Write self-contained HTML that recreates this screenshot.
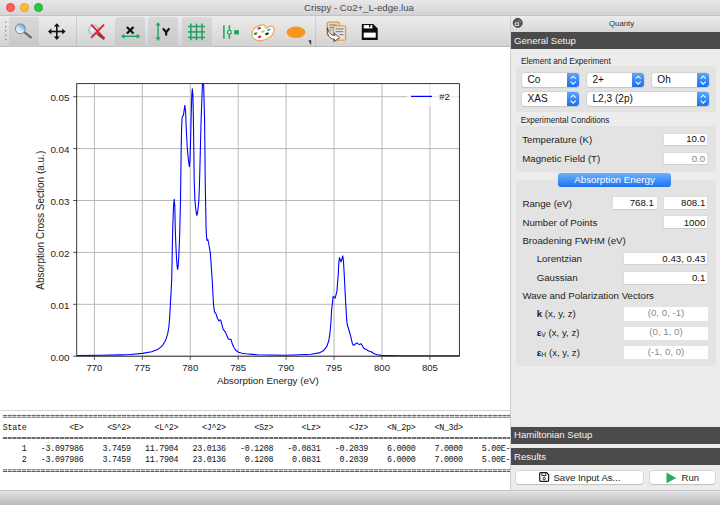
<!DOCTYPE html>
<html><head><meta charset="utf-8">
<style>
*{margin:0;padding:0;box-sizing:border-box}
html,body{width:720px;height:505px;overflow:hidden;background:#fff;font-family:"Liberation Sans",sans-serif;color:#222}
.a{position:absolute}
.t{position:absolute;white-space:nowrap;line-height:1}
#titlebar{left:0;top:0;width:720px;height:16px;background:linear-gradient(#e9e7e9,#d5d3d5);border-bottom:1px solid #c4c2c4}
.light{position:absolute;top:3.15px;width:9px;height:9px;border-radius:50%}
#toolbar{left:0;top:16px;width:511px;height:31px;background:linear-gradient(#ececec,#d3d3d3);border-bottom:1px solid #bdbdbd}
.chk{position:absolute;top:1px;height:30px;border-radius:3px 3px 0 0;background:linear-gradient(#d9d9d9,#c8c8c8)}
#dock{left:510px;top:16px;width:210px;height:474px;background:#ececec}
#docktitle{left:0;top:0;width:210px;height:16px;background:linear-gradient(#ececec,#d7d7d7)}
.hdr{position:absolute;left:1px;width:209px;background:#4b4b4b;color:#f4f4f4;font-size:9.6px}
.hdr span{position:absolute;left:3px}
.grp{position:absolute;background:#e3e3e3;border-radius:4px}
.lbl{position:absolute;white-space:nowrap;font-size:9.7px;line-height:1;color:#222}
.fld{position:absolute;background:#fff;border:0.5px solid #dddddd;border-bottom-color:#cfcfcf;font-size:9.4px;line-height:1;text-align:right;color:#111}
.fld span{position:absolute;right:3px}
.combo{position:absolute;background:#fff;border-radius:3px;box-shadow:0 0 0 0.5px #c8c8c8,0 0.5px 1px rgba(0,0,0,.15);font-size:9.9px;color:#111}
.combo .st{position:absolute;right:0;top:0;bottom:0;width:12px;border-radius:0 3px 3px 0;background:linear-gradient(#5aa5fb,#1b70ef)}

.combo span{position:absolute;left:5.7px}
#out{left:0;top:411px;width:510px;height:79px;overflow:hidden;background:#fff;font-family:"Liberation Mono",monospace;font-size:7.9px;color:#111}
#status{left:0;top:490px;width:720px;height:15px;background:linear-gradient(#e3e3e3,#b9b9b9);border-top:1px solid #c4c4c4}
.btn{position:absolute;background:#fff;border-radius:3px;box-shadow:0 0 0 0.5px #c6c6c6,0 0.5px 1px rgba(0,0,0,.2);font-size:9.6px}
</style></head><body>

<div id="titlebar" class="a">
 <div class="light" style="left:5.57px;background:#fe5f57;border:0.5px solid #e8493f"></div>
 <div class="light" style="left:19.9px;background:#febc2e;border:0.5px solid #e3a322"></div>
 <div class="light" style="left:34.25px;background:#2ac840;border:0.5px solid #1fac30"></div>
 <div class="t" style="left:304px;top:3.3px;font-size:9.65px;color:#4a4a4a">Crispy - Co2+_L-edge.lua</div>
</div>

<div id="toolbar" class="a">
 <!-- handle dots -->
 <svg class="a" style="left:0;top:0" width="511" height="31">
  <g fill="#858585"><rect x="5" y="5.6" width="1.3" height="1.3"/><rect x="5" y="9.9" width="1.3" height="1.3"/><rect x="5" y="14.2" width="1.3" height="1.3"/><rect x="5" y="18.6" width="1.3" height="1.3"/><rect x="5" y="22.8" width="1.3" height="1.3"/></g>
  <line x1="76.5" y1="1" x2="76.5" y2="30" stroke="#9a9a9a" stroke-width="0.8" stroke-dasharray="1,1.5"/>
  <line x1="315.6" y1="1" x2="315.6" y2="30" stroke="#9a9a9a" stroke-width="0.8" stroke-dasharray="1,1.5"/>
 </svg>
 <div class="chk" style="left:9px;width:29.5px"></div>
 <div class="chk" style="left:115.3px;width:29.7px"></div>
 <div class="chk" style="left:148.2px;width:30px"></div>
 <div class="chk" style="left:181.7px;width:30px"></div>
 <svg class="a" style="left:0;top:0" width="511" height="31">
  <!-- zoom magnifier -->
  <defs><radialGradient id="lens2" cx="0.4" cy="0.4" r="0.7"><stop offset="0" stop-color="#f4fbff"/><stop offset="1" stop-color="#9fd3ef"/></radialGradient><linearGradient id="lens" x1="0.8" y1="0.1" x2="0.2" y2="0.9"><stop offset="0" stop-color="#44ace4"/><stop offset="0.5" stop-color="#bfe2f4"/><stop offset="1" stop-color="#f4f9fb"/></linearGradient></defs>
  <line x1="24.6" y1="16.4" x2="30.8" y2="21.4" stroke="#6e5664" stroke-width="2.3" stroke-linecap="round"/>
  <line x1="24.6" y1="16.4" x2="30.8" y2="21.4" stroke="#a48a98" stroke-width="0.7" stroke-linecap="round"/>
  <circle cx="20.35" cy="12.8" r="4.9" fill="url(#lens)" stroke="#8e7e86" stroke-width="1"/>
  <!-- move -->
  <g stroke="#111" stroke-width="1.6" fill="#111">
   <line x1="56.8" y1="9" x2="56.8" y2="22"/><line x1="50" y1="15.5" x2="63.6" y2="15.5"/>
  </g>
  <g fill="#111">
   <path d="M56.8,7.2 L53.8,10.6 L59.8,10.6Z"/><path d="M56.8,23.9 L53.8,20.5 L59.8,20.5Z"/>
   <path d="M48,15.5 L51.4,12.5 L51.4,18.5Z"/><path d="M65.6,15.5 L62.2,12.5 L62.2,18.5Z"/>
  </g>
  <!-- reset zoom: magnifier with red x -->
  <line x1="97" y1="17.5" x2="103.6" y2="22.6" stroke="#4a4048" stroke-width="2" stroke-linecap="round"/>
  <circle cx="93.7" cy="13.9" r="4.9" fill="url(#lens2)" stroke="#a8a8ac" stroke-width="0.9"/>
  <g stroke="#ec1c2a" stroke-width="1.9" stroke-linecap="butt"><line x1="91.1" y1="8.7" x2="104.5" y2="22.4"/><line x1="104" y1="8.7" x2="91.1" y2="21.8"/></g>
  <!-- X axis -->
  <g stroke="#111" stroke-width="2.2" stroke-linecap="butt"><line x1="126.9" y1="10.9" x2="133.5" y2="17.6"/><line x1="133.5" y1="10.9" x2="126.9" y2="17.6"/></g>
  <g stroke="#1fa35a" stroke-width="1.4"><line x1="123" y1="20.3" x2="138.3" y2="20.3"/></g>
  <g fill="#1fa35a"><path d="M120.9,20.3 L124.6,17.9 L124.6,22.7Z"/><path d="M140.4,20.3 L136.7,17.9 L136.7,22.7Z"/></g>
  <!-- Y axis -->
  <g stroke="#1fa35a" stroke-width="1.4"><line x1="158.1" y1="8" x2="158.1" y2="23"/></g>
  <g fill="#1fa35a"><path d="M158.1,5.9 L155.7,9.6 L160.5,9.6Z"/><path d="M158.1,25 L155.7,21.3 L160.5,21.3Z"/></g>
  <g stroke="#111" stroke-width="2.2" stroke-linecap="butt" fill="none"><path d="M162.9,12.4 L166.15,16.2 L169.4,12.4 M166.15,16.2 L166.15,19.6"/></g>
  <!-- grid -->
  <g stroke="#1ca35c" stroke-width="1.5">
   <line x1="190.9" y1="7.6" x2="190.9" y2="24.2"/><line x1="196.5" y1="7.6" x2="196.5" y2="24.2"/><line x1="202" y1="7.6" x2="202" y2="24.2"/>
   <line x1="188" y1="10.5" x2="205" y2="10.5"/><line x1="188" y1="15.9" x2="205" y2="15.9"/><line x1="188" y1="21.5" x2="205" y2="21.5"/>
  </g>
  <!-- subplots -->
  <g stroke="#1ca35c" stroke-width="1.5"><line x1="223.9" y1="9.3" x2="223.9" y2="22.8"/><line x1="229.4" y1="9.3" x2="229.4" y2="13.8"/><line x1="229.4" y1="18.6" x2="229.4" y2="22.8"/></g>
  <circle cx="229.4" cy="16.2" r="1.9" fill="#fff" stroke="#1ca35c" stroke-width="1.2"/>
  <rect x="234.2" y="14.2" width="4.7" height="4.2" fill="#1ca35c"/>
  <!-- palette -->
  <path d="M264.5,9.0 C258,8.4 252.2,12.5 251.9,18 C251.6,22.5 256,25 261,24.6 C267.5,24 273.8,19.5 274,14 C274.2,10.6 271.5,9.4 268.8,10.6 C267.2,11.3 266.2,12.4 265.4,12.0 C264.6,11.6 265.8,9.3 264.5,9.0Z" fill="#fff" stroke="#f0a454" stroke-width="1.2"/>
  <g transform="rotate(-20 263 16)">
  </g>
  <ellipse cx="259.2" cy="12.3" rx="1.9" ry="1.1" fill="#6a3b9c" transform="rotate(-20 259.2 12.3)"/>
  <ellipse cx="268.75" cy="13.7" rx="1.9" ry="1.1" fill="#1fb0ee" transform="rotate(-20 268.75 13.7)"/>
  <ellipse cx="262.9" cy="15.5" rx="1.9" ry="1.1" fill="#c5d619" transform="rotate(-20 262.9 15.5)"/>
  <ellipse cx="255.6" cy="17.6" rx="1.9" ry="1.1" fill="#17a34e" transform="rotate(-20 255.6 17.6)"/>
  <ellipse cx="267" cy="17.8" rx="1.9" ry="1.1" fill="#1e1e1e" transform="rotate(-20 267 17.8)"/>
  <ellipse cx="259.6" cy="20.9" rx="1.9" ry="1.1" fill="#e6197a" transform="rotate(-20 259.6 20.9)"/>
  <!-- orange ellipse -->
  <ellipse cx="296" cy="16.3" rx="9.4" ry="5.8" fill="#f7941d"/>
  <path d="M308.3,24.2 L311.2,24.2 L311.2,29.2Z" fill="#333"/>
  <!-- copy docs -->
  <rect x="327.2" y="6.1" width="12.1" height="13.4" rx="1.3" fill="#d9d9db" stroke="#f39c2e" stroke-width="1.3"/>
  <g stroke="#6a6a6a" stroke-width="0.9"><line x1="329.4" y1="9.0" x2="336.6" y2="9.0"/><line x1="329.4" y1="11.6" x2="334.8" y2="11.6"/><line x1="329.4" y1="14.2" x2="331.2" y2="14.2"/></g>
  <rect x="333.4" y="9.9" width="12.2" height="14.2" rx="1.3" fill="#e2e2e4" stroke="#f39c2e" stroke-width="1.3"/>
  <g stroke="#6a6a6a" stroke-width="0.9"><line x1="335.6" y1="12.9" x2="343.6" y2="12.9"/><line x1="335.6" y1="15.7" x2="343.2" y2="15.7"/><line x1="339.2" y1="18.7" x2="343.6" y2="18.7"/></g>
  <path d="M327.4,11.8 C328.6,16.8 331.0,19.4 335.0,19.6 L334.2,17.0 L339.6,21.8 L333.8,25.6 L334.6,23.2 C329.6,23.2 326.6,18.6 327.4,11.8 Z" fill="#fff" stroke="#222" stroke-width="0.75" stroke-linejoin="round"/>
  <!-- floppy -->
  <path d="M361.8,8.0 L373.2,8.0 L377.7,12.4 L377.7,24.1 L361.8,24.1Z" fill="#0a0a0a"/>
  <rect x="363.7" y="16.6" width="12.05" height="5.0" fill="#fff"/>
  <rect x="363.7" y="9.1" width="8.7" height="3.3" fill="#fff"/>
  <rect x="369.0" y="9.1" width="1.4" height="2.2" fill="#0a0a0a"/>
 </svg>
</div>

<div id="dock" class="a">
 <div class="a" style="left:0;top:0;width:1px;height:474px;background:#cfcfcf;z-index:3"></div>
 <div id="docktitle" class="a">
  <svg class="a" style="left:0;top:0" width="20" height="16">
   <circle cx="7.7" cy="6.9" r="4.45" fill="#5c5c5c" stroke="#383838" stroke-width="1"/>
   <rect x="4.9" y="6.5" width="4" height="3.4" fill="#e6e6e6"/><rect x="5.9" y="7.3" width="1.9" height="1.7" fill="#444"/>
   <path d="M9.3,5.0 L10.3,5.0 L10.3,6.2" stroke="#cfcfcf" stroke-width="0.6" fill="none"/>
  </svg>
  <div class="t" style="left:99px;top:4.1px;font-size:7.8px;color:#333">Quanty</div>
 </div>
 <div class="hdr" style="top:16px;height:16.7px"><span style="top:2.8px">General Setup</span></div>
 <!-- content will be added -->
 <div class="lbl" style="left:11.00px;top:41.71px;font-size:8.2px;">Element and Experiment</div>
<div class="grp" style="left:5.80px;top:50.10px;width:200.30px;height:45.50px"></div>
<div class="combo" style="left:11.90px;top:56.70px;width:57.00px;height:14.10px;font-size:10.1px"><span style="top:1.55px">Co</span><div class="st"><svg style="position:absolute;left:0;top:0" width="12" height="14"><path d="M3.7,5.7 L6.2,3.2 L8.7,5.7 M3.7,8.7 L6.2,11.2 L8.7,8.7" stroke="#fff" stroke-width="1.05" fill="none"/></svg></div></div>
<div class="combo" style="left:76.80px;top:56.70px;width:57.00px;height:14.10px;font-size:10.1px"><span style="top:1.55px">2+</span><div class="st"><svg style="position:absolute;left:0;top:0" width="12" height="14"><path d="M3.7,5.7 L6.2,3.2 L8.7,5.7 M3.7,8.7 L6.2,11.2 L8.7,8.7" stroke="#fff" stroke-width="1.05" fill="none"/></svg></div></div>
<div class="combo" style="left:141.60px;top:56.70px;width:57.10px;height:14.10px;font-size:10.1px"><span style="top:1.55px">Oh</span><div class="st"><svg style="position:absolute;left:0;top:0" width="12" height="14"><path d="M3.7,5.7 L6.2,3.2 L8.7,5.7 M3.7,8.7 L6.2,11.2 L8.7,8.7" stroke="#fff" stroke-width="1.05" fill="none"/></svg></div></div>
<div class="combo" style="left:11.90px;top:75.60px;width:57.00px;height:14.00px;font-size:10.1px"><span style="top:1.65px">XAS</span><div class="st"><svg style="position:absolute;left:0;top:0" width="12" height="14"><path d="M3.7,5.7 L6.2,3.2 L8.7,5.7 M3.7,8.7 L6.2,11.2 L8.7,8.7" stroke="#fff" stroke-width="1.05" fill="none"/></svg></div></div>
<div class="combo" style="left:76.80px;top:75.60px;width:121.90px;height:14.00px;font-size:10.1px"><span style="top:1.65px">L2,3 (2p)</span><div class="st"><svg style="position:absolute;left:0;top:0" width="12" height="14"><path d="M3.7,5.7 L6.2,3.2 L8.7,5.7 M3.7,8.7 L6.2,11.2 L8.7,8.7" stroke="#fff" stroke-width="1.05" fill="none"/></svg></div></div>
<div class="lbl" style="left:10.70px;top:100.76px;font-size:8.2px;">Experimental Conditions</div>
<div class="grp" style="left:5.50px;top:109.60px;width:200.30px;height:46.40px"></div>
<div class="lbl" style="left:12.20px;top:118.69px;font-size:9.7px;">Temperature (K)</div>
<div class="fld" style="left:152.80px;top:116.60px;width:45.70px;height:13.80px;font-size:9.7px;color:#111;"><span style="right:2.4px;top:0.79px">10.0</span></div>
<div class="lbl" style="left:12.20px;top:137.99px;font-size:9.7px;">Magnetic Field (T)</div>
<div class="fld" style="left:152.80px;top:136.00px;width:45.70px;height:13.20px;font-size:9.7px;color:#888;"><span style="right:2.4px;top:0.59px">0.0</span></div>
<div class="grp" style="left:5.50px;top:164.00px;width:200.10px;height:186.20px"></div>
<div class="a" style="left:48.299999999999955px;top:156.5px;width:112.5px;height:14.2px;border-radius:3px;background:linear-gradient(#6cb2fc,#1c72f0);color:#fff;font-size:9.8px"><span class="t" style="left:15.9px;top:2.50px">Absorption Energy</span></div>
<div class="lbl" style="left:12.40px;top:182.59px;font-size:9.7px;">Range (eV)</div>
<div class="fld" style="left:101.50px;top:180.30px;width:46.10px;height:14.10px;font-size:9.7px;color:#111;"><span style="right:2.7px;top:1.19px">768.1</span></div>
<div class="fld" style="left:152.70px;top:180.30px;width:45.70px;height:14.10px;font-size:9.7px;color:#111;"><span style="right:2.1px;top:1.19px">808.1</span></div>
<div class="lbl" style="left:12.40px;top:201.69px;font-size:9.7px;">Number of Points</div>
<div class="fld" style="left:152.70px;top:199.30px;width:45.70px;height:14.00px;font-size:9.7px;color:#111;"><span style="right:2.1px;top:1.29px">1000</span></div>
<div class="lbl" style="left:12.40px;top:219.79px;font-size:9.7px;">Broadening FWHM (eV)</div>
<div class="lbl" style="left:26.70px;top:237.89px;font-size:9.7px;">Lorentzian</div>
<div class="fld" style="left:113.30px;top:235.50px;width:85.20px;height:13.75px;font-size:9.7px;color:#111;"><span style="right:2.1px;top:1.19px">0.43, 0.43</span></div>
<div class="lbl" style="left:26.70px;top:257.29px;font-size:9.7px;">Gaussian</div>
<div class="fld" style="left:113.30px;top:254.70px;width:85.20px;height:14.10px;font-size:9.7px;color:#111;"><span style="right:2.1px;top:1.39px">0.1</span></div>
<div class="lbl" style="left:12.40px;top:275.39px;font-size:9.7px;">Wave and Polarization Vectors</div>
<div class="lbl" style="left:26.70px;top:292.89px;font-size:9.7px;"><b>k</b> (x, y, z)</div>
<div class="fld" style="left:114.00px;top:291.40px;width:84.00px;height:13.30px;font-size:9.7px;color:#8a8a8a;border:0;"><span style="left:0;right:0;top:0.49px;text-align:center">(0, 0, -1)</span></div>
<div class="lbl" style="left:26.70px;top:312.49px;font-size:9.7px;"><b>&#949;</b><span style="font-size:6.8px;position:relative;top:1px">V</span> (x, y, z)</div>
<div class="fld" style="left:114.00px;top:311.00px;width:84.00px;height:12.80px;font-size:9.7px;color:#8a8a8a;border:0;"><span style="left:0;right:0;top:0.39px;text-align:center">(0, 1, 0)</span></div>
<div class="lbl" style="left:26.70px;top:331.79px;font-size:9.7px;"><b>&#949;</b><span style="font-size:6.8px;position:relative;top:1px">H</span> (x, y, z)</div>
<div class="fld" style="left:114.00px;top:330.00px;width:84.00px;height:13.20px;font-size:9.7px;color:#8a8a8a;border:0;"><span style="left:0;right:0;top:0.59px;text-align:center">(-1, 0, 0)</span></div>

 <div class="hdr" style="top:411.0px;height:17.4px"><span style="top:2.3px">Hamiltonian Setup</span></div>
 <div class="hdr" style="top:432.1px;height:16.6px"><span style="top:2.6px">Results</span></div>
 <div class="btn" style="left:6.4px;top:454.5px;width:127px;height:13.7px">
   <svg class="a" style="left:22.6px;top:1.6px" width="11" height="11"><path d="M1.5,0.7 L7.6,0.7 L9.6,2.7 L9.6,8.6 Q9.6,9.4 8.8,9.4 L1.5,9.4 Q0.7,9.4 0.7,8.6 L0.7,1.5 Q0.7,0.7 1.5,0.7Z" fill="none" stroke="#1a1a1a" stroke-width="1.2"/><path d="M2.9,0.7 L2.9,3.5 L6.9,3.5 L6.9,0.7" fill="none" stroke="#1a1a1a" stroke-width="0.9"/><circle cx="5.1" cy="6.5" r="1.25" fill="none" stroke="#1a1a1a" stroke-width="0.9"/></svg>
   <span class="t" style="left:37px;top:2.3px">Save Input As...</span></div>
 <div class="btn" style="left:139.6px;top:454.6px;width:65.6px;height:13.6px">
   <svg class="a" style="left:16px;top:1px" width="12" height="12"><path d="M0.5,0.6 L10.2,5.9 L0.5,11.3Z" fill="#27ae5a"/></svg>
   <span class="t" style="left:32px;top:2.3px">Run</span></div>

</div>

<!-- plot -->
<svg class="a" style="left:0;top:47px" width="510" height="363" viewBox="0 47 510 363">
 <defs><clipPath id="ax"><rect x="76.7" y="83.6" width="382.7" height="272.6"/></clipPath></defs>
 <line x1="94.40" y1="83.6" x2="94.40" y2="356.2" stroke="#b8b8b8" stroke-width="1"/>
 <line x1="94.40" y1="356.2" x2="94.40" y2="359.7" stroke="#222" stroke-width="0.8"/>
 <text x="94.40" y="370.6" font-size="9.6" text-anchor="middle" fill="#222">770</text>
 <line x1="142.33" y1="83.6" x2="142.33" y2="356.2" stroke="#b8b8b8" stroke-width="1"/>
 <line x1="142.33" y1="356.2" x2="142.33" y2="359.7" stroke="#222" stroke-width="0.8"/>
 <text x="142.33" y="370.6" font-size="9.6" text-anchor="middle" fill="#222">775</text>
 <line x1="190.26" y1="83.6" x2="190.26" y2="356.2" stroke="#b8b8b8" stroke-width="1"/>
 <line x1="190.26" y1="356.2" x2="190.26" y2="359.7" stroke="#222" stroke-width="0.8"/>
 <text x="190.26" y="370.6" font-size="9.6" text-anchor="middle" fill="#222">780</text>
 <line x1="238.19" y1="83.6" x2="238.19" y2="356.2" stroke="#b8b8b8" stroke-width="1"/>
 <line x1="238.19" y1="356.2" x2="238.19" y2="359.7" stroke="#222" stroke-width="0.8"/>
 <text x="238.19" y="370.6" font-size="9.6" text-anchor="middle" fill="#222">785</text>
 <line x1="286.12" y1="83.6" x2="286.12" y2="356.2" stroke="#b8b8b8" stroke-width="1"/>
 <line x1="286.12" y1="356.2" x2="286.12" y2="359.7" stroke="#222" stroke-width="0.8"/>
 <text x="286.12" y="370.6" font-size="9.6" text-anchor="middle" fill="#222">790</text>
 <line x1="334.05" y1="83.6" x2="334.05" y2="356.2" stroke="#b8b8b8" stroke-width="1"/>
 <line x1="334.05" y1="356.2" x2="334.05" y2="359.7" stroke="#222" stroke-width="0.8"/>
 <text x="334.05" y="370.6" font-size="9.6" text-anchor="middle" fill="#222">795</text>
 <line x1="381.98" y1="83.6" x2="381.98" y2="356.2" stroke="#b8b8b8" stroke-width="1"/>
 <line x1="381.98" y1="356.2" x2="381.98" y2="359.7" stroke="#222" stroke-width="0.8"/>
 <text x="381.98" y="370.6" font-size="9.6" text-anchor="middle" fill="#222">800</text>
 <line x1="429.91" y1="83.6" x2="429.91" y2="356.2" stroke="#b8b8b8" stroke-width="1"/>
 <line x1="429.91" y1="356.2" x2="429.91" y2="359.7" stroke="#222" stroke-width="0.8"/>
 <text x="429.91" y="370.6" font-size="9.6" text-anchor="middle" fill="#222">805</text>
 <line x1="76.7" y1="356.20" x2="459.4" y2="356.20" stroke="#b8b8b8" stroke-width="1"/>
 <line x1="73.2" y1="356.20" x2="76.7" y2="356.20" stroke="#222" stroke-width="0.8"/>
 <text x="69.5" y="360.50" font-size="9.8" text-anchor="end" fill="#222">0.00</text>
 <line x1="76.7" y1="304.30" x2="459.4" y2="304.30" stroke="#b8b8b8" stroke-width="1"/>
 <line x1="73.2" y1="304.30" x2="76.7" y2="304.30" stroke="#222" stroke-width="0.8"/>
 <text x="69.5" y="308.60" font-size="9.8" text-anchor="end" fill="#222">0.01</text>
 <line x1="76.7" y1="252.40" x2="459.4" y2="252.40" stroke="#b8b8b8" stroke-width="1"/>
 <line x1="73.2" y1="252.40" x2="76.7" y2="252.40" stroke="#222" stroke-width="0.8"/>
 <text x="69.5" y="256.70" font-size="9.8" text-anchor="end" fill="#222">0.02</text>
 <line x1="76.7" y1="200.50" x2="459.4" y2="200.50" stroke="#b8b8b8" stroke-width="1"/>
 <line x1="73.2" y1="200.50" x2="76.7" y2="200.50" stroke="#222" stroke-width="0.8"/>
 <text x="69.5" y="204.80" font-size="9.8" text-anchor="end" fill="#222">0.03</text>
 <line x1="76.7" y1="148.60" x2="459.4" y2="148.60" stroke="#b8b8b8" stroke-width="1"/>
 <line x1="73.2" y1="148.60" x2="76.7" y2="148.60" stroke="#222" stroke-width="0.8"/>
 <text x="69.5" y="152.90" font-size="9.8" text-anchor="end" fill="#222">0.04</text>
 <line x1="76.7" y1="96.70" x2="459.4" y2="96.70" stroke="#b8b8b8" stroke-width="1"/>
 <line x1="73.2" y1="96.70" x2="76.7" y2="96.70" stroke="#222" stroke-width="0.8"/>
 <text x="69.5" y="101.00" font-size="9.8" text-anchor="end" fill="#222">0.05</text>
 <rect x="406.7" y="84.2" width="52" height="22.5" fill="#fff" fill-opacity="0.6"/>
 <line x1="411" y1="96.4" x2="432" y2="96.4" stroke="#0000ff" stroke-width="1.25"/>
 <text x="439.3" y="100.1" font-size="9.5" fill="#222">#2</text>
 <path d="M76.7,355.6 L100.0,355.3 L120.0,354.9 L130.0,354.5 L142.5,353.4 L151.6,351.8 L157.5,349.6 L162.5,345.6 L165.9,339.7 L167.9,332.8 L169.0,326.0 L169.6,318.0 L170.4,304.4 L171.7,280.0 L172.7,230.0 L173.5,207.0 L174.2,199.4 L174.8,206.0 L175.3,230.0 L176.0,248.0 L176.6,260.0 L177.2,267.0 L177.6,269.4 L178.1,267.0 L178.7,258.0 L179.3,245.0 L179.8,230.0 L180.5,200.0 L181.2,148.0 L181.6,128.0 L182.1,118.0 L182.5,116.2 L183.4,115.6 L184.0,111.0 L184.9,105.4 L185.6,112.0 L186.3,130.0 L187.3,148.0 L188.4,160.0 L189.4,166.6 L190.0,160.0 L190.6,140.0 L191.2,115.0 L191.8,95.0 L192.3,88.9 L192.9,95.0 L193.4,120.0 L193.8,148.0 L194.2,180.0 L194.9,200.0 L195.6,207.5 L196.3,213.0 L196.9,215.4 L197.5,213.0 L198.2,207.5 L198.9,200.0 L199.6,180.0 L200.4,148.0 L201.1,120.0 L202.5,83.6 L203.1,72.0 L203.6,83.6 L204.6,120.0 L204.9,148.0 L205.2,180.0 L206.1,228.0 L206.5,236.0 L207.0,240.5 L207.8,239.5 L208.5,242.5 L210.3,252.6 L212.2,280.0 L213.5,304.5 L214.5,311.9 L215.9,313.7 L217.5,318.5 L218.9,320.8 L220.0,319.8 L220.7,320.2 L223.1,329.1 L225.4,332.1 L228.4,339.2 L230.8,339.2 L232.2,343.5 L233.8,347.3 L235.6,350.0 L238.5,352.2 L242.0,353.2 L245.6,353.8 L257.5,354.7 L270.0,355.0 L286.0,355.2 L300.0,354.8 L310.8,354.3 L319.2,352.9 L323.3,350.8 L326.7,346.7 L328.8,340.8 L330.0,332.5 L330.8,324.2 L331.6,310.0 L332.3,304.0 L333.1,296.3 L335.1,298.1 L336.9,291.6 L338.3,273.8 L338.8,262.7 L339.5,257.7 L341.0,261.9 L342.8,255.9 L343.5,262.0 L344.2,273.8 L345.0,290.0 L345.8,304.7 L346.7,320.0 L347.3,325.0 L348.3,328.0 L350.8,336.7 L352.5,344.2 L353.8,345.4 L356.7,342.9 L359.2,344.6 L361.2,343.8 L363.8,348.3 L365.8,349.2 L369.2,351.2 L371.2,351.7 L374.2,353.8 L377.5,354.8 L381.7,355.4 L400.0,355.7 L459.4,355.8" fill="none" stroke="#0000ff" stroke-width="1.1" stroke-linejoin="round" clip-path="url(#ax)"/>
 <rect x="76.7" y="83.6" width="382.7" height="272.6" fill="none" stroke="#222" stroke-width="0.9"/>
 <text x="267.8" y="383.8" font-size="9.8" text-anchor="middle" fill="#222">Absorption Energy (eV)</text>
 <text transform="translate(44.3,220.2) rotate(-90)" font-size="10" text-anchor="middle" fill="#222">Absorption Cross Section (a.u.)</text>
</svg>
<div class="a" style="left:0;top:410px;width:510px;height:1px;background:#d4d4d4"></div>
<div id="out" class="a"><svg class="a" style="left:0;top:0" width="510" height="79"><g stroke="#5a5a5a" stroke-width="1" stroke-dasharray="4.157 0.6"><line x1="2.9" y1="4.40" x2="520" y2="4.40"/><line x1="2.9" y1="6.20" x2="520" y2="6.20"/></g></svg><svg class="a" style="left:0;top:0" width="510" height="79"><g stroke="#3c3c3c" stroke-width="1.4" stroke-dasharray="4.157 0.6"><line x1="2.9" y1="27.00" x2="520" y2="27.00"/></g></svg><svg class="a" style="left:0;top:0" width="510" height="79"><g stroke="#5a5a5a" stroke-width="1" stroke-dasharray="4.157 0.6"><line x1="2.9" y1="58.80" x2="520" y2="58.80"/><line x1="2.9" y1="60.50" x2="520" y2="60.50"/></g></svg><div class="t" style="left:2.8px;top:12.79px;font-size:8.4px;letter-spacing:-0.283px">State&#160;&#160;&#160;&#160;&#160;&#160;&#160;&#160;&#160;&lt;E&gt;&#160;&#160;&#160;&#160;&#160;&lt;S^2&gt;&#160;&#160;&#160;&#160;&#160;&lt;L^2&gt;&#160;&#160;&#160;&#160;&#160;&lt;J^2&gt;&#160;&#160;&#160;&#160;&#160;&#160;&lt;Sz&gt;&#160;&#160;&#160;&#160;&#160;&#160;&lt;Lz&gt;&#160;&#160;&#160;&#160;&#160;&#160;&lt;Jz&gt;&#160;&#160;&#160;&#160;&lt;N_2p&gt;&#160;&#160;&#160;&#160;&lt;N_3d&gt;</div><div class="t" style="left:2.8px;top:33.69px;font-size:8.4px;letter-spacing:-0.283px">&#160;&#160;&#160;&#160;1&#160;&#160;&#160;-3.097986&#160;&#160;&#160;&#160;3.7459&#160;&#160;&#160;11.7904&#160;&#160;&#160;23.0136&#160;&#160;&#160;-0.1208&#160;&#160;&#160;-0.0831&#160;&#160;&#160;-0.2039&#160;&#160;&#160;&#160;6.0000&#160;&#160;&#160;&#160;7.0000&#160;&#160;&#160;&#160;5.00E-01</div><div class="t" style="left:2.8px;top:44.99px;font-size:8.4px;letter-spacing:-0.283px">&#160;&#160;&#160;&#160;2&#160;&#160;&#160;-3.097986&#160;&#160;&#160;&#160;3.7459&#160;&#160;&#160;11.7904&#160;&#160;&#160;23.0136&#160;&#160;&#160;&#160;0.1208&#160;&#160;&#160;&#160;0.0831&#160;&#160;&#160;&#160;0.2039&#160;&#160;&#160;&#160;6.0000&#160;&#160;&#160;&#160;7.0000&#160;&#160;&#160;&#160;5.00E-01</div></div>
<div id="status" class="a"></div>
</body></html>
